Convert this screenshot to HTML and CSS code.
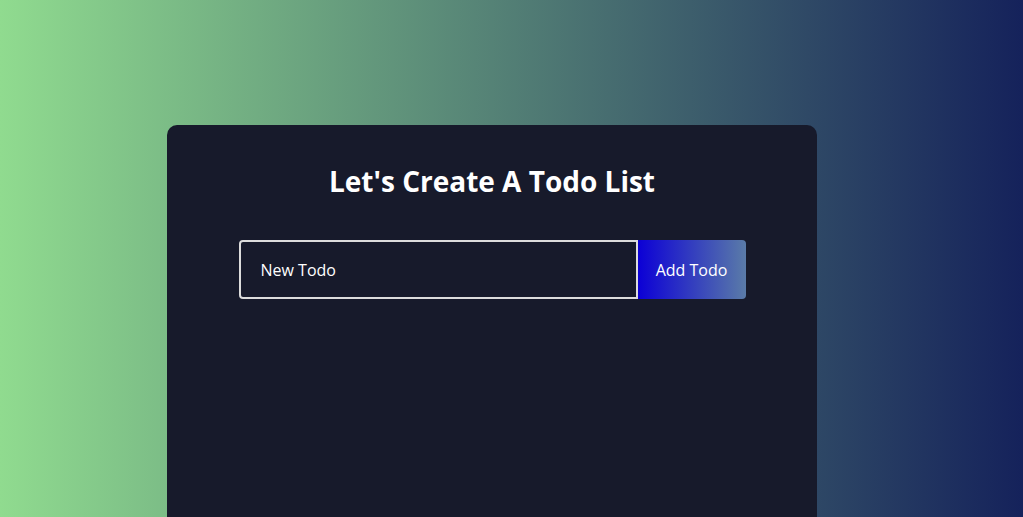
FILE: index.html
```html
<!DOCTYPE html>
<html lang="en">
<head>
<meta charset="utf-8">
<title>Todo</title>
<link rel="stylesheet" href="styles.css">
</head>
<body>
<main class="card">
  <h1 class="title">Let's Create A Todo List</h1>
  <form class="todo-form">
    <input class="todo-input" type="text" value="New Todo">
    <button class="todo-btn" type="button">Add Todo</button>
  </form>
</main>
</body>
</html>
```
FILE: styles.css
```css
html, body {
  margin: 0;
  height: 100%;
}
body {
  background: linear-gradient(90deg, #90db8f 0%, #15225b 100%);
  font-family: "Open Sans", "DejaVu Sans", sans-serif;
  overflow: hidden;
}
.card {
  width: 650px;
  height: calc(100vh - 125px);
  margin: 125px 0 0 167px;
  background: #171a2b;
  border-radius: 10px 10px 0 0;
  padding-top: 38px;
  box-sizing: border-box;
  display: flex;
  flex-direction: column;
  align-items: center;
}
.title {
  margin: 0;
  color: #ffffff;
  font-size: 28px;
  font-weight: 700;
  line-height: 36px;
}
.todo-form {
  display: flex;
  margin-top: 41px;
}
.todo-input {
  width: 399px;
  height: 59px;
  box-sizing: border-box;
  border: 2px solid #dcdcdc;
  border-radius: 4px 0 0 4px;
  background: #171a2b;
  color: #ffffff;
  font-family: inherit;
  font-size: 16px;
  padding: 0 20px;
  outline: none;
}
.todo-btn {
  width: 108px;
  height: 59px;
  border: none;
  border-radius: 0 4px 4px 0;
  background: linear-gradient(90deg, #0c00d6 0%, #5a7ba8 100%);
  color: #ffffff;
  font-family: inherit;
  font-size: 16px;
  cursor: pointer;
}
```
